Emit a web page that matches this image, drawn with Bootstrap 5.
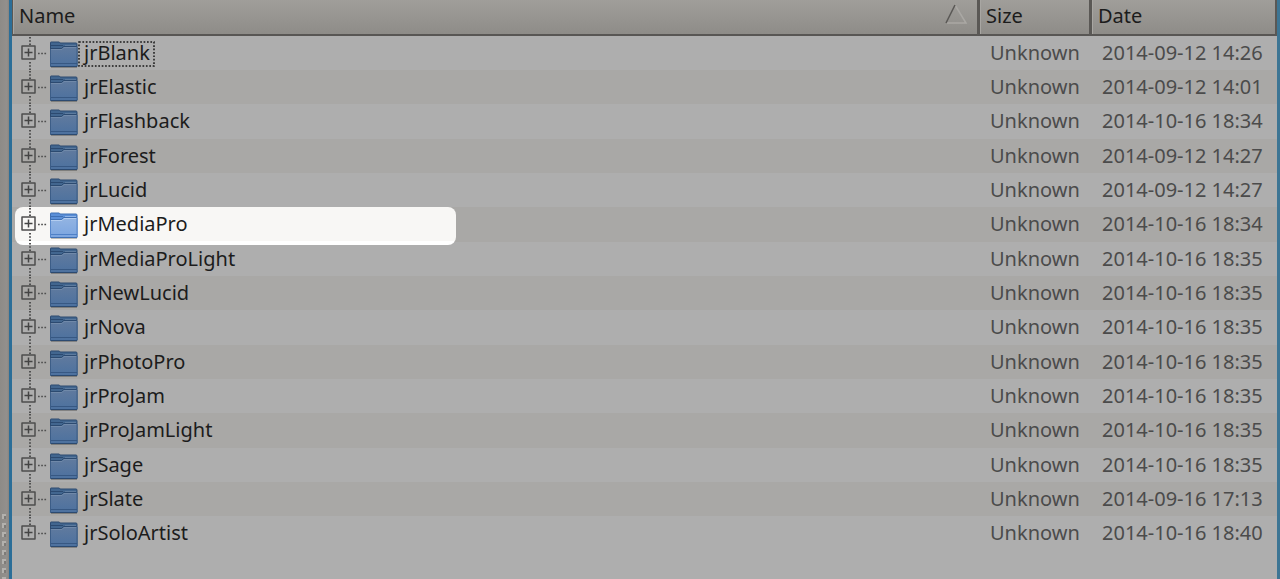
<!DOCTYPE html>
<html lang="en">
<head>
<meta charset="utf-8">
<meta name="viewport" content="width=device-width, initial-scale=1">
<title>Files</title>
<link href="https://cdn.jsdelivr.net/npm/bootstrap@5.3.0/dist/css/bootstrap.min.css" rel="stylesheet">
<style>
body { background: #8f8c88; font-family: "Noto Sans", "Open Sans", sans-serif; font-size: 20px; line-height: 30px; color: #1c1c1c; }
.splitter { width: 9px; background: linear-gradient(90deg, #8d8b87, #93908d 7px, #85837f); }
.splitter svg { display: block; }
.pane { background: #aeaeae; border-left: 3px solid #2b6e98; border-right: 3px solid #3d7594; min-width: 0; }
.files { --bs-table-bg: transparent; table-layout: fixed; border-collapse: separate; border-spacing: 0; color: inherit; }
.files > :not(caption) > * > * { padding: 0; border: 0; box-shadow: none; background: none; color: inherit; vertical-align: top; }
.files > thead > tr > th { height: 36px; background: linear-gradient(#a09e9a, #8e8c88); border-left: 3px solid #5a5855; border-bottom: 2px solid #585654; box-shadow: inset 1px 0 #a8a6a2; }
.files > thead > tr > th:first-child { border-left-width: 1px; }
.files > thead > tr > th:last-child { border-right: 2px solid #5a5855; }
.head-btn { height: 34px; border: 0; background: none; color: inherit; padding: 0 6px; line-height: 32px; }
.files tbody tr { height: 34px; }
.files tbody tr:nth-child(3n) { height: 35px; }
.files tbody tr:nth-child(even) { background: #a9a8a6; }
.files > tbody > tr > td { white-space: nowrap; color: #4b4b4b; line-height: 34px; padding-left: 13px; }
.files > tbody > tr > td:first-child { color: #1c1c1c; position: relative; padding-left: 0; }
.entry { position: relative; z-index: 1; height: 34px; }
.toggle { border: 0; padding: 0; background: none; width: 38px; height: 34px; }
.toggle svg, .folder { display: block; }
.name-label { position: relative; padding: 0 6px; }
.focus-box { position: absolute; left: 0; top: 5px; width: 100%; height: 26px; }
.spot { position: absolute; left: 3px; top: 0; width: 441px; height: 38px; border-radius: 8px; background: linear-gradient(#f8f7f5 34px, #fff 34px); }
.col-size { width: 112px; }
.col-date { width: 188px; }
</style>
</head>
<body>
<svg width="0" height="0" class="position-absolute" aria-hidden="true">
  <defs>
    <linearGradient id="front" x1="0" y1="0" x2="0" y2="1"><stop offset="0" stop-color="#607a9e"/><stop offset="1" stop-color="#4c719f"/></linearGradient>
    <linearGradient id="front-lit" x1="0" y1="0" x2="0" y2="1"><stop offset="0" stop-color="#93b4e2"/><stop offset="1" stop-color="#7ba5e0"/></linearGradient>
    <symbol id="plus" viewBox="0 0 15 15"><path d="M1 1h13v13H1z" fill="none" stroke="#4e4e4e" stroke-width="1.5" stroke-linejoin="round"/><path d="M3.5 7.5h8M7.5 3.5v8" stroke="#444" stroke-width="1.5"/></symbol>
  </defs>
</svg>
<div class="d-flex min-vh-100">
  <div class="splitter flex-shrink-0 d-flex align-items-end">
    <svg width="9" height="66" aria-hidden="true"><defs><pattern id="grip" width="9" height="9" patternUnits="userSpaceOnUse"><path d="M2 1h4v2H4v3H2z" fill="#b3b1ad"/><path d="M4 3h2v3H4z" fill="#7d7b78"/></pattern></defs><path d="M0 0h9v66H0z" fill="url(#grip)"/></svg>
  </div>
  <main class="pane flex-grow-1">
    <table class="table files mb-0 w-100">
      <colgroup><col><col class="col-size"><col class="col-date"></colgroup>
      <thead>
        <tr>
          <th class="fw-normal" scope="col" aria-sort="ascending"><button class="head-btn w-100 d-flex justify-content-between" type="button">Name
            <svg width="26" height="30" aria-hidden="true"><path d="M10 5L21 23H2" fill="none" stroke="#aaa8a4" stroke-width="1.5"/><path d="M1 23L10 5" stroke="#5a5855" stroke-width="1.5"/></svg></button></th>
          <th class="fw-normal" scope="col"><button class="head-btn d-flex" type="button">Size</button></th>
          <th class="fw-normal" scope="col"><button class="head-btn d-flex" type="button">Date</button></th>
        </tr>
      </thead>
      <tbody id="rows"></tbody>
    </table>
  </main>
</div>
<script src="https://cdn.jsdelivr.net/npm/bootstrap@5.3.0/dist/js/bootstrap.bundle.min.js"></script>
<script>
const files = [
  ["jrBlank", "2014-09-12 14:26"], ["jrElastic", "2014-09-12 14:01"], ["jrFlashback", "2014-10-16 18:34"],
  ["jrForest", "2014-09-12 14:27"], ["jrLucid", "2014-09-12 14:27"], ["jrMediaPro", "2014-10-16 18:34"],
  ["jrMediaProLight", "2014-10-16 18:35"], ["jrNewLucid", "2014-10-16 18:35"], ["jrNova", "2014-10-16 18:35"],
  ["jrPhotoPro", "2014-10-16 18:35"], ["jrProJam", "2014-10-16 18:35"], ["jrProJamLight", "2014-10-16 18:35"],
  ["jrSage", "2014-10-16 18:35"], ["jrSlate", "2014-09-16 17:13"], ["jrSoloArtist", "2014-10-16 18:40"]
];
const folder = lit => {
  const [back, edge, fill, line, shine] = lit
    ? ["#5a8fd8", "#3f70b4", "url(#front-lit)", "#4a7cc4", "#b4cdf0"]
    : ["#42668f", "#2c4a70", "url(#front)", "#34557f", "#7089a9"];
  return `<svg class="folder flex-shrink-0" width="28" height="34" aria-hidden="true">
    <path d="M1 31.500h26" stroke="#000" stroke-opacity=".25"/>
    <path d="M.5 30V6.500q0-.5.5-.5h8q.5 0 1 1h16q1 0 1 1v22z" fill="${back}" stroke="${edge}"/>
    <path d="M1 9.500h12" stroke="${edge}"/>
    <path d="M15 9.500h11" stroke="${shine}" stroke-opacity=".6"/>
    <path d="M0 13h12l2-2h13.500v19.500H0z" fill="${fill}"/>
    <path d="M0 12.500h11.500l2-2h13" fill="none" stroke="${edge}"/>
    <path d="M1 13.500h11l2-2h12.500" fill="none" stroke="${shine}"/>
    <path d="M.5 13v17.500h26.500V11" fill="none" stroke="${line}" stroke-opacity=".75"/>
    <path d="M1 27.500h26" stroke="${line}" stroke-opacity=".9"/>
    <path d="M1 30.500h26" stroke="${edge}"/></svg>`;
};
document.getElementById("rows").innerHTML = files.map(([name, date], i) => {
  const lit = name === "jrMediaPro", last = i === files.length - 1;
  return `<tr><td>${lit ? '<div class="spot"></div>' : ""}<div class="entry d-flex">
    <button class="toggle flex-shrink-0" type="button" aria-label="Expand ${name}"><svg width="38" height="34">
      <path d="M18 1v8${last ? "" : "M18 26v8"}" stroke="#505050" stroke-width="2" stroke-dasharray="1.500 1.800"/>
      <path d="M26 17.500h9" stroke="#505050" stroke-width="1.500" stroke-dasharray="1.700 1.500"/>
      <use href="#plus" x="9" y="9" width="15" height="15"/></svg></button>
    ${folder(lit)}<span class="name-label">${name}${i === 0 ? '<svg class="focus-box" aria-hidden="true"><rect x="1" y="1" width="75" height="24" fill="none" stroke="#1a1a1a" stroke-width="1.500" stroke-dasharray="1.700 1.700"/></svg>' : ""}</span>
    </div></td><td>Unknown</td><td>${date}</td></tr>`;
}).join("");
</script>
</body>
</html>
